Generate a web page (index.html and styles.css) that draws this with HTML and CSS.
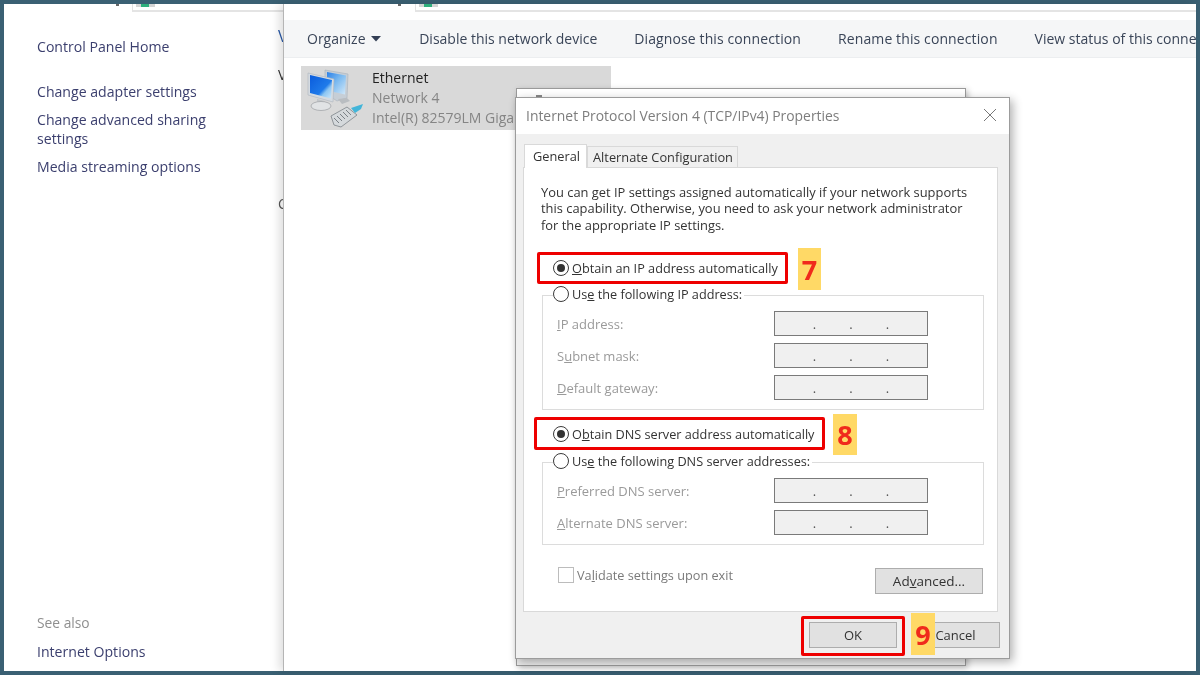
FILE: index.html
```html
<!DOCTYPE html>
<html lang="en">
<head>
<meta charset="utf-8">
<title>Internet Protocol Version 4 Properties</title>
<link rel="stylesheet" href="styles.css">
</head>
<body>
<div class="desktop">
  <aside class="nav-window">
    <div class="addr-sliver"><i class="addr-dot"></i><span class="addr-box"><i class="addr-icon"></i></span></div>
    <nav class="nav-links">
      <a class="link home">Control Panel Home</a>
      <a class="link">Change adapter settings</a>
      <a class="link">Change advanced sharing settings</a>
      <a class="link">Media streaming options</a>
    </nav>
    <div class="see-also">
      <div class="see-title">See also</div>
      <a class="link">Internet Options</a>
    </div>
    <span class="clip c1">V</span><span class="clip c2">V</span><span class="clip c3">C</span>
  </aside>
  <main class="net-window">
    <div class="addr-sliver second"><i class="addr-dot"></i><span class="addr-box"><i class="addr-icon"></i></span></div>
    <div class="toolbar">
      <span class="tool organize">Organize <svg class="caret" width="10" height="6" viewBox="0 0 10 6"><path d="M0 0h10L5 5.500z" fill="#333f55"/></svg></span>
      <span class="tool">Disable this network device</span>
      <span class="tool wide">Diagnose this connection</span>
      <span class="tool wide">Rename this connection</span>
      <span class="tool">View status of this connection</span>
    </div>
    <div class="tile">
      <svg class="net-icon" width="60" height="60" viewBox="0 0 60 60">
        <defs>
          <linearGradient id="scr" x1="0" y1="0" x2="1" y2="1">
            <stop offset="0" stop-color="#0a5bdc"/>
            <stop offset=".6" stop-color="#1f7bea"/>
            <stop offset=".72" stop-color="#8cc6f3"/>
            <stop offset="1" stop-color="#cfe8fa"/>
          </linearGradient>
          <linearGradient id="scr2" x1="0" y1="0" x2="1" y2="1">
            <stop offset="0" stop-color="#2a7fe8"/>
            <stop offset=".45" stop-color="#78b8f0"/>
            <stop offset="1" stop-color="#d4e9f8"/>
          </linearGradient>
        </defs>
        <path d="M20 2l23 4-1 24-10 3-12-8z" fill="#c6ced6" stroke="#a9b2bb" stroke-width=".6"/>
        <path d="M22 4l19 3.400-1 19-18-4z" fill="url(#scr2)"/>
        <path d="M33 31l9-1 3 3-8 3z" fill="#b9bdc1"/>
        <path d="M3 5l26 6-1 23-25-7z" fill="#d5dbe1" stroke="#aeb6be" stroke-width=".6"/>
        <path d="M5 7l22 5-1 18.500L5 25z" fill="url(#scr)"/>
        <path d="M12 31l8 2v3l-8-1z" fill="#c2c6ca"/>
        <ellipse cx="16" cy="38" rx="10" ry="4.500" fill="#e1e3e5" stroke="#a3a6a9" stroke-width=".8"/>
        <path d="M26 48l16-9 10 8-16 12-7-2z" fill="#d5d9dc" stroke="#7e8489" stroke-width=".8"/>
        <path d="M29 50l5 5M32 48l5 5M35 46l5 5M38 44l5 5M41 42l5 5" stroke="#71777d" stroke-width=".9" fill="none"/>
        <path d="M46 40l12-4-2 5-6 4z" fill="#43b5d9"/>
      </svg>
      <div class="tile-text">
        <div class="tile-name">Ethernet</div>
        <div>Network 4</div>
        <div>Intel(R) 82579LM Gigabit Network Connection</div>
      </div>
    </div>
  </main>

  <div class="back-dialog"></div>

  <section class="dialog">
    <header class="title-bar">
      <span>Internet Protocol Version 4 (TCP/IPv4) Properties</span>
      <svg width="14" height="14" viewBox="0 0 14 14"><path d="M1 1l12 12M13 1L1 13" stroke="#777" fill="none"/></svg>
    </header>
    <div class="tabs">
      <span class="tab active">General</span>
      <span class="tab">Alternate Configuration</span>
    </div>
    <div class="panel">
      <p class="intro">You can get IP settings assigned automatically if your network supports<br>this capability. Otherwise, you need to ask your network administrator<br>for the appropriate IP settings.</p>

      <label class="radio-row first"><i class="radio on"></i><span><u>O</u>btain an IP address automatically</span></label>
      <div class="group">
        <label class="radio-row legend"><i class="radio"></i><span>Us<u>e</u> the following IP address:</span></label>
        <div class="field"><span><u>I</u>P address:</span><span class="ip"><b>.</b><b>.</b><b>.</b></span></div>
        <div class="field"><span>S<u>u</u>bnet mask:</span><span class="ip"><b>.</b><b>.</b><b>.</b></span></div>
        <div class="field"><span><u>D</u>efault gateway:</span><span class="ip"><b>.</b><b>.</b><b>.</b></span></div>
      </div>

      <label class="radio-row second-auto"><i class="radio on"></i><span>O<u>b</u>tain DNS server address automatically</span></label>
      <div class="group dns">
        <label class="radio-row legend"><i class="radio"></i><span>Us<u>e</u> the following DNS server addresses:</span></label>
        <div class="field"><span><u>P</u>referred DNS server:</span><span class="ip"><b>.</b><b>.</b><b>.</b></span></div>
        <div class="field"><span><u>A</u>lternate DNS server:</span><span class="ip"><b>.</b><b>.</b><b>.</b></span></div>
      </div>

      <div class="panel-foot">
        <label class="check"><i class="box"></i><span>Va<u>l</u>idate settings upon exit</span></label>
        <span class="btn advanced">Ad<u>v</u>anced...</span>
      </div>
    </div>
    <footer class="dialog-foot">
      <span class="btn ok">OK</span>
      <span class="btn cancel">Cancel</span>
    </footer>
  </section>

  <div class="mark m7"></div><div class="badge b7">7</div>
  <div class="mark m8"></div><div class="badge b8">8</div>
  <div class="mark m9"></div><div class="badge b9">9</div>
</div>
</body>
</html>
```
FILE: styles.css
```css
* { box-sizing: border-box; }
html, body { margin: 0; height: 100%; }
body { background: #3a6073; font-family: "Open Sans", "Noto Sans", sans-serif; overflow: hidden; }
.desktop { position: relative; width: 1200px; height: 675px; overflow: hidden; background: #3a6073; filter: blur(.45px); }
.link { display: block; color: #3b3f6e; font-size: 14.1px; line-height: 19px; }

.nav-window { position: absolute; left: 4px; top: 4px; width: 280px; height: 667px; background: #fff; overflow: hidden; }
.addr-sliver { height: 8px; padding-left: 128px; position: relative; }
.addr-dot { position: absolute; left: 112px; top: 0; width: 3px; height: 2px; background: #666; }
.addr-box { display: block; position: relative; width: 100%; height: 8px; border-left: 1px solid #e2e2e2; border-bottom: 2px solid #e4e4e4; }
.addr-icon { position: absolute; left: 3px; top: 0; width: 19px; height: 3px; background: linear-gradient(90deg, #d5d5d5 0 25%, #2fae7c 25% 70%, #d5d5d5 70%); }
.nav-links { padding: 25px 0 0 33px; width: 215px; }
.nav-links .link { margin-bottom: 9px; }
.nav-links .link.home { margin-bottom: 26px; }
.see-also { position: absolute; left: 33px; top: 609px; }
.see-title { font-size: 13.8px; line-height: 19px; color: #8f8f8f; margin-bottom: 10px; }
.clip { position: absolute; left: 274px; font-size: 16px; line-height: 20px; color: #2a5aa8; }
.c1 { top: 22px; }
.c2 { top: 61px; color: #333; font-size: 14px; }
.c3 { top: 190px; color: #555; font-size: 14px; }

.net-window { position: absolute; left: 283px; top: 4px; width: 913px; height: 667px; background: #fff; border-left: 1px solid #b5b5b5; box-shadow: -4px 0 9px rgba(0,0,0,.13); overflow: hidden; }
.addr-sliver.second { padding-left: 131px; height: 16px; }
.addr-sliver.second .addr-box { height: 8px; }
.addr-sliver.second .addr-dot { left: 114px; }
.toolbar { display: flex; align-items: center; height: 38px; background: #f5f6f7; border-bottom: 1px solid #eceef0; padding-left: 23px; white-space: nowrap; }
.tool { font-size: 14px; color: #3a4558; margin-right: 37px; }
.tool.wide { letter-spacing: .11px; }
.organize { margin-right: 38px; }
.caret { margin-left: 2px; vertical-align: 2px; }
.tile { display: flex; width: 310px; height: 64px; margin: 8px 0 0 17px; background: #d9d9d9; padding: 2px 0 0 4px; overflow: hidden; }
.net-icon { flex: none; margin-right: 7px; }
.tile-text { width: 143px; font-size: 14px; line-height: 20px; color: #858585; white-space: nowrap; overflow: hidden; flex: none; }
.tile-name { color: #222; }

.back-dialog { position: absolute; left: 516px; top: 88px; width: 450px; height: 578px; background: linear-gradient(#fff 0 40px, #ececec 40px); border: 1px solid #9a9a9a; box-shadow: 2px 2px 6px rgba(0,0,0,.25); }
.back-dialog::before { content: ""; position: absolute; left: 19px; top: 6px; width: 6px; height: 3px; background: #888; }
.dialog { position: absolute; left: 515px; top: 97px; width: 495px; height: 562px; background: #f0f0f0; border: 1px solid #9c9c9c; box-shadow: 3px 3px 9px rgba(0,0,0,.3); display: flex; flex-direction: column; font-size: 12.7px; color: #333; }
.title-bar { height: 36px; background: #fff; display: flex; align-items: center; justify-content: space-between; padding: 0 12px 2px 10px; font-size: 13.9px; color: #7d7d7d; }
.tabs { display: flex; align-items: flex-end; height: 33px; padding-left: 8px; }
.tab { width: 151px; height: 21px; padding-left: 5px; border: 1px solid #d9d9d9; border-bottom: 0; background: #f0f0f0; font-size: 12.8px; line-height: 21px; white-space: nowrap; }
.tab.active { height: 24px; width: 63px; padding: 1px 0 0 8px; line-height: 20px; background: #fff; position: relative; top: 1px; z-index: 1; }
.panel { width: 475px; height: 445px; margin-left: 7px; background: #fff; border: 1px solid #d9d9d9; padding: 16px 0 0 17px; position: relative; }
.intro { margin: 0; font-size: 12.9px; line-height: 16.3px; white-space: nowrap; }
.radio-row { display: flex; align-items: center; gap: 3px; line-height: 16px; white-space: nowrap; }
.radio { width: 16px; height: 16px; border: 1px solid #3a3a3a; border-radius: 50%; background: #fff; position: relative; flex: none; }
.radio.on::after { content: ""; position: absolute; left: 3px; top: 3px; width: 8px; height: 8px; border-radius: 50%; background: #333; }
.first { margin: 27px 0 0 12px; }
.group { width: 442px; height: 115px; margin: 19px 0 0 1px; border: 1px solid #dcdcdc; padding: 0 55px 0 14px; position: relative; }
.legend { position: absolute; left: 10px; top: -10px; background: #fff; padding-right: 2px; }
.field { display: flex; justify-content: space-between; align-items: center; height: 24px; margin-bottom: 8px; color: #9a9a9a; font-size: 13px; }
.group .field:first-of-type { margin-top: 16px; }
.ip { width: 154px; height: 25px; background: #f0f0f0; border: 1px solid #7a7a7a; display: flex; justify-content: center; gap: 33px; padding-top: 3px; }
.ip b { font-weight: 400; color: #555; }
.second-auto { margin: 16px 0 0 12px; }
.group.dns { height: 83px; margin-top: 20px; }
.panel-foot { display: flex; align-items: flex-start; justify-content: space-between; width: 442px; margin: 23px 0 0 0; }
.check { display: flex; align-items: center; gap: 3px; margin: -1px 0 0 17px; color: #7a7a7a; line-height: 16px; height: 16px; }
.box { width: 16px; height: 16px; border: 1px solid #bcbcbc; background: #fff; }
.btn { display: flex; align-items: center; justify-content: center; background: #e1e1e1; border: 1px solid #adadad; color: #333; font-size: 13px; }
.advanced { width: 108px; height: 26px; font-size: 13.5px; }
.dialog-foot { display: flex; justify-content: flex-end; gap: 14px; padding: 10px 9px 0 0; }
.ok { width: 88px; height: 26px; }
.cancel { width: 89px; height: 26px; }

.mark { position: absolute; border: 3px solid #ee0000; border-radius: 2px; }
.m7 { left: 537px; top: 252px; width: 251px; height: 32px; }
.m8 { left: 534px; top: 417px; width: 291px; height: 33px; }
.m9 { left: 801px; top: 616px; width: 104px; height: 40px; }
.badge { position: absolute; background: #ffd966; color: #f02a1c; font-weight: 700; font-size: 27px; display: flex; align-items: center; justify-content: center; }
.b7 { left: 798px; top: 248px; width: 23px; height: 42px; }
.b8 { left: 833px; top: 414px; width: 24px; height: 41px; }
.b9 { left: 911px; top: 613px; width: 24px; height: 42px; }
```
